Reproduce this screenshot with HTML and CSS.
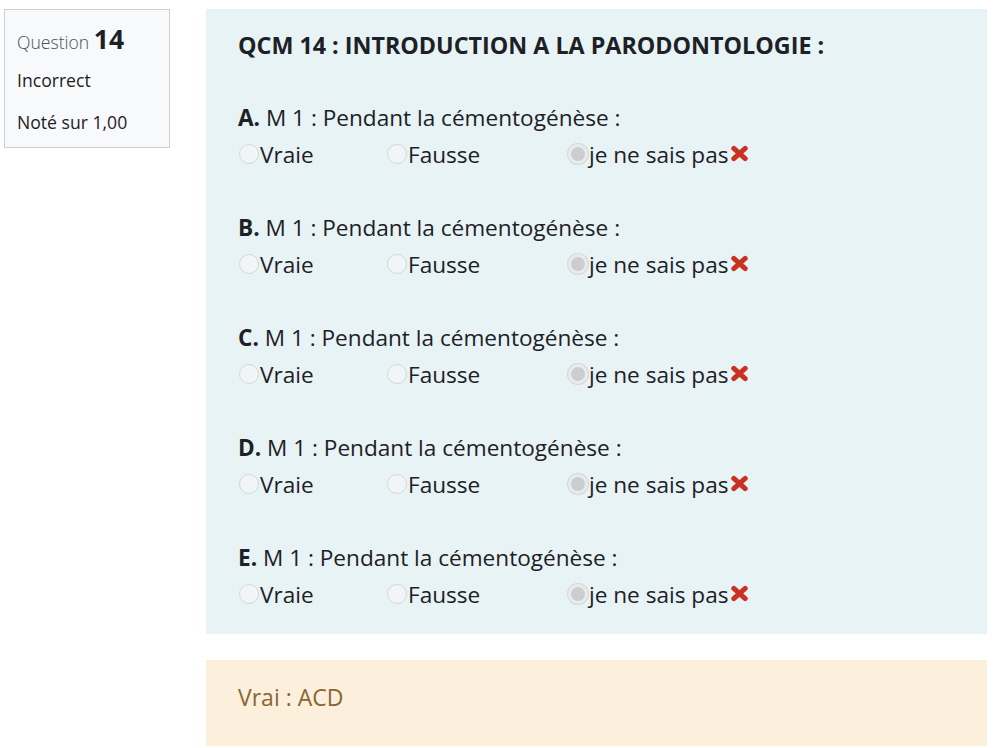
FILE: index.html
```html
<!DOCTYPE html>
<html lang="fr">
<head>
<meta charset="utf-8">
<title>Question 14</title>
<link rel="stylesheet" href="styles.css">
</head>
<body>
<div class="que">
  <div class="info">
    <h3 class="no">Question <span class="qno">14</span></h3>
    <div class="state">Incorrect</div>
    <div class="grade">Noté sur 1,00</div>
  </div>
  <div class="content">
    <div class="formulation">
      <p class="qtext">QCM 14 : INTRODUCTION A LA PARODONTOLOGIE :</p>
      <div class="sub">
        <div class="stem"><b>A.</b> M 1 : Pendant la cémentogénèse :</div>
        <div class="opts">
          <label class="opt o1"><span class="radio"></span>Vraie</label>
          <label class="opt o2"><span class="radio"></span>Fausse</label>
          <label class="opt"><span class="radio checked"></span>je ne sais pas<svg class="x" viewBox="0 0 18 16" width="19" height="17"><path d="M3.6 3.2 L14.4 12.8 M14.4 3.2 L3.6 12.8" stroke="#ca3120" stroke-width="4.8" stroke-linecap="round" fill="none"/></svg></label>
        </div>
      </div>
      <div class="sub">
        <div class="stem"><b>B.</b> M 1 : Pendant la cémentogénèse :</div>
        <div class="opts">
          <label class="opt o1"><span class="radio"></span>Vraie</label>
          <label class="opt o2"><span class="radio"></span>Fausse</label>
          <label class="opt"><span class="radio checked"></span>je ne sais pas<svg class="x" viewBox="0 0 18 16" width="19" height="17"><path d="M3.6 3.2 L14.4 12.8 M14.4 3.2 L3.6 12.8" stroke="#ca3120" stroke-width="4.8" stroke-linecap="round" fill="none"/></svg></label>
        </div>
      </div>
      <div class="sub">
        <div class="stem"><b>C.</b> M 1 : Pendant la cémentogénèse :</div>
        <div class="opts">
          <label class="opt o1"><span class="radio"></span>Vraie</label>
          <label class="opt o2"><span class="radio"></span>Fausse</label>
          <label class="opt"><span class="radio checked"></span>je ne sais pas<svg class="x" viewBox="0 0 18 16" width="19" height="17"><path d="M3.6 3.2 L14.4 12.8 M14.4 3.2 L3.6 12.8" stroke="#ca3120" stroke-width="4.8" stroke-linecap="round" fill="none"/></svg></label>
        </div>
      </div>
      <div class="sub">
        <div class="stem"><b>D.</b> M 1 : Pendant la cémentogénèse :</div>
        <div class="opts">
          <label class="opt o1"><span class="radio"></span>Vraie</label>
          <label class="opt o2"><span class="radio"></span>Fausse</label>
          <label class="opt"><span class="radio checked"></span>je ne sais pas<svg class="x" viewBox="0 0 18 16" width="19" height="17"><path d="M3.6 3.2 L14.4 12.8 M14.4 3.2 L3.6 12.8" stroke="#ca3120" stroke-width="4.8" stroke-linecap="round" fill="none"/></svg></label>
        </div>
      </div>
      <div class="sub">
        <div class="stem"><b>E.</b> M 1 : Pendant la cémentogénèse :</div>
        <div class="opts">
          <label class="opt o1"><span class="radio"></span>Vraie</label>
          <label class="opt o2"><span class="radio"></span>Fausse</label>
          <label class="opt"><span class="radio checked"></span>je ne sais pas<svg class="x" viewBox="0 0 18 16" width="19" height="17"><path d="M3.6 3.2 L14.4 12.8 M14.4 3.2 L3.6 12.8" stroke="#ca3120" stroke-width="4.8" stroke-linecap="round" fill="none"/></svg></label>
        </div>
      </div>
    </div>
    <div class="outcome">Vrai : ACD</div>
  </div>
</div>
</body>
</html>
```
FILE: styles.css
```css
html, body {
  margin: 0;
  padding: 0;
  background: #ffffff;
}
body {
  font-family: "Open Sans", "Noto Sans", sans-serif;
  color: #1d2125;
}
.que {
  display: flex;
  align-items: flex-start;
  padding: 9px 0 0 4px;
}
.info {
  box-sizing: border-box;
  width: 166px;
  height: 139px;
  background: #f8f9fa;
  border: 1px solid #cad0d7;
  padding: 0 0 0 12px;
  font-size: 17.6px;
  flex-shrink: 0;
}
.no {
  margin: 0;
  font-weight: 300;
  font-size: 17.6px;
  color: #495057;
  line-height: 26px;
  padding-top: 16px;
  height: 26px;
}
.qno {
  font-weight: 700;
  font-size: 26.5px;
  color: #1d2125;
}
.state {
  line-height: 26px;
  margin-top: 15px;
}
.grade {
  line-height: 26px;
  margin-top: 16px;
}
.content {
  margin-left: 36px;
  width: 781px;
  display: flex;
  flex-direction: column;
  gap: 26px;
}
.formulation {
  background: #e7f3f5;
  padding: 21px 32px 21px 32px;
  height: 583px;
}
.qtext {
  margin: 0 0 39px 0;
  font-size: 23.3px;
  font-weight: 700;
  line-height: 30px;
}
.sub {
  font-size: 22.6px;
  margin-bottom: 36px;
}
.sub:last-child {
  margin-bottom: 0;
}
.stem {
  line-height: 37px;
}
.stem b {
  font-weight: 700;
}
.opts {
  display: flex;
  line-height: 37px;
}
.opt {
  display: flex;
  align-items: center;
}
.o1 {
  width: 148px;
}
.o2 {
  width: 181px;
}
.radio {
  box-sizing: border-box;
  width: 20px;
  height: 20px;
  border-radius: 50%;
  border: 1px solid #d3d8db;
  background: #f1f5f6;
  margin: 0 1px 2px 1px;
  flex-shrink: 0;
}
.radio.checked {
  background: #cbcdce;
  border: 3px solid #e9ecee;
  box-shadow: 0 0 0 1px #d3d8db;
}
.x {
  margin-left: 2px;
  margin-bottom: 2px;
}
.outcome {
  background: #fcefdc;
  color: #8a6633;
  font-size: 23px;
  line-height: 37px;
  padding: 19px 32px 30px 32px;
}
```
